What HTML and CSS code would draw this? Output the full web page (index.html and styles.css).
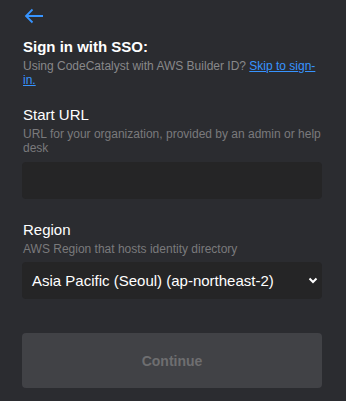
FILE: index.html
```html
<!DOCTYPE html>
<html lang="en">
<head>
    <meta charset="UTF-8">
    <meta name="viewport" content="width=device-width, initial-scale=1.0">
    <title>Sign in with SSO</title>
    <link rel="stylesheet" href="styles.css">
</head>
<body>
    <div class="panel">
        <button class="back" aria-label="Back">
            <svg width="20" height="16" viewBox="0 0 20 16">
                <path d="M19 8H2M8.5 1.5L2 8l6.5 6.5" fill="none" stroke="#3794ff" stroke-width="1.8"/>
            </svg>
        </button>

        <h2 class="title">Sign in with SSO:</h2>
        <p class="sub">Using CodeCatalyst with AWS Builder ID? <a href="#">Skip to sign-in.</a></p>

        <div class="field">
            <label for="start-url">Start URL</label>
            <p class="hint">URL for your organization, provided by an admin or help desk</p>
            <input type="text" id="start-url">
        </div>

        <div class="field">
            <label for="region">Region</label>
            <p class="hint">AWS Region that hosts identity directory</p>
            <div class="select" id="region">
                <span>Asia Pacific (Seoul) (ap-northeast-2)</span>
                <svg width="10" height="7" viewBox="0 0 10 7">
                    <path d="M1.5 1.5L5 5l3.5-3.5" fill="none" stroke="#fff" stroke-width="2"/>
                </svg>
            </div>
        </div>

        <button class="continue" disabled>Continue</button>
    </div>
</body>
</html>
```

FILE: styles.css
```css
body {
    margin: 0;
    background-color: #2b2c30;
    font-family: "Liberation Sans", Arial, sans-serif;
    color: #ffffff;
}
.panel {
    display: flex;
    flex-direction: column;
    padding: 8px 24px 0 22px;
}
.back {
    align-self: flex-start;
    background: none;
    border: none;
    padding: 0;
    margin-left: 2px;
    height: 16px;
    cursor: pointer;
}
.back svg {
    display: block;
}
.title {
    font-size: 15px;
    font-weight: bold;
    margin: 14px 0 0 1px;
}
.sub {
    font-size: 12px;
    color: #88888a;
    margin: 4px 0 0 1px;
    line-height: 14px;
}
.sub a {
    color: #3794ff;
}
.field {
    display: flex;
    flex-direction: column;
    margin-top: 19px;
}
.field + .field {
    margin-top: 22px;
}
label {
    font-size: 15px;
    margin-left: 1px;
}
.hint {
    font-size: 12px;
    color: #7a7a7c;
    margin: 4px 0 7px 1px;
    line-height: 14px;
}
.field + .field .hint {
    margin-bottom: 6px;
}
input[type="text"] {
    height: 37px;
    box-sizing: border-box;
    background-color: #252526;
    border: none;
    border-radius: 4px;
    color: #ffffff;
}
.select {
    height: 37px;
    box-sizing: border-box;
    background-color: #252526;
    border-radius: 4px;
    display: flex;
    align-items: center;
    justify-content: space-between;
    padding: 0 4px 0 10px;
    font-size: 15px;
}
.continue {
    margin-top: 34px;
    height: 55px;
    background-color: #414246;
    border: none;
    border-radius: 4px;
    color: #6e6e70;
    font-family: inherit;
    font-size: 14px;
    font-weight: bold;
}
```
